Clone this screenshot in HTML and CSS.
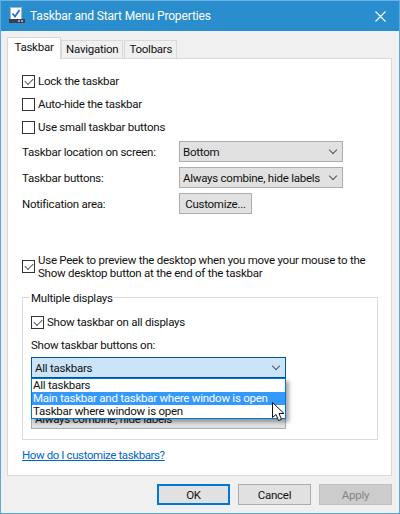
FILE: index.html
```html
<!DOCTYPE html>
<html lang="en">
<head>
    <meta charset="UTF-8">
    <meta name="viewport" content="width=device-width, initial-scale=1.0">
    <title>Taskbar and Start Menu Properties</title>
    <link rel="stylesheet" href="styles.css">
</head>
<body>
    <div class="window">
        <div class="titlebar">
            <svg class="app-icon" width="17" height="18" viewBox="0 0 17 18">
                <rect x="1.5" y="0.5" width="11" height="12" fill="#fff" stroke="#a8b4bc"/>
                <path d="M3.5 6.5l2.5 3L10.5 3" fill="none" stroke="#1f6fe0" stroke-width="1.8"/>
                <rect x="0" y="12" width="16" height="4" fill="#3a3f58"/>
                <rect x="9" y="13" width="2" height="2" fill="#9aa3ab"/>
                <rect x="12" y="13" width="2" height="2" fill="#9aa3ab"/>
            </svg>
            <span class="title-text">Taskbar and Start Menu Properties</span>
            <svg class="close-icon" width="11" height="11" viewBox="0 0 11 11">
                <path d="M0.5 0.5l10 10M10.5 0.5l-10 10" stroke="#fff" stroke-width="1.1"/>
            </svg>
        </div>

        <div class="tabs">
            <div class="tab active">Taskbar</div>
            <div class="tab">Navigation</div>
            <div class="tab">Toolbars</div>
        </div>

        <div class="panel">
            <div class="check-list">
                <label class="check-row"><span class="checkbox checked"></span>Lock the taskbar</label>
                <label class="check-row"><span class="checkbox"></span>Auto-hide the taskbar</label>
                <label class="check-row"><span class="checkbox"></span>Use small taskbar buttons</label>
            </div>

            <div class="settings">
                <span class="setting-label">Taskbar location on screen:</span>
                <div class="select wide">Bottom<span class="chevron"></span></div>
                <span class="setting-label">Taskbar buttons:</span>
                <div class="select wide">Always combine, hide labels<span class="chevron"></span></div>
                <span class="setting-label">Notification area:</span>
                <div class="btn customize">Customize...</div>
            </div>

            <label class="check-row peek"><span class="checkbox checked"></span>
                <span>Use Peek to preview the desktop when you move your mouse to the<br>Show desktop button at the end of the taskbar</span>
            </label>

            <div class="group">
                <span class="legend">Multiple displays</span>
                <label class="check-row"><span class="checkbox checked"></span>Show taskbar on all displays</label>
                <div class="group-label">Show taskbar buttons on:</div>
                <div class="combo">
                    <div class="select open">All taskbars<span class="chevron"></span></div>
                    <div class="dropdown">
                        <div class="option">All taskbars</div>
                        <div class="option selected">Main taskbar and taskbar where window is open</div>
                        <div class="option">Taskbar where window is open</div>
                    </div>
                    <svg class="cursor" width="14" height="21" viewBox="0 0 14 21">
                        <path d="M0.5 0.5v15l3.5-3 2.5 6 3-1.2-2.5-5.8h5z" fill="#fff" stroke="#111"/>
                    </svg>
                </div>
                <div class="select under">Always combine, hide labels</div>
            </div>

            <a class="help-link" href="#">How do I customize taskbars?</a>
        </div>

        <div class="footer">
            <div class="btn default">OK</div>
            <div class="btn">Cancel</div>
            <div class="btn disabled">Apply</div>
        </div>
    </div>
</body>
</html>
```

FILE: styles.css
```css
* {
    box-sizing: border-box;
}

body {
    margin: 0;
    font-family: 'Roboto', sans-serif;
    font-size: 11.5px;
    letter-spacing: -0.25px;
    color: #111;
    white-space: nowrap;
}

.window {
    width: 400px;
    height: 514px;
    background-color: #f0f0f0;
    border: 1px solid #5aa9e0;
    border-top-color: #6cb3e4;
    overflow: hidden;
}

.titlebar {
    display: flex;
    align-items: center;
    height: 30px;
    background-color: #2a8dce;
    color: white;
    padding: 0 13px 0 8px;
}

.app-icon {
    margin-right: 4px;
}

.title-text {
    flex: 1;
    font-size: 12px;
    letter-spacing: -0.15px;
}

.tabs {
    display: flex;
    align-items: flex-end;
    height: 27px;
    padding-left: 6px;
}

.tab {
    height: 18px;
    line-height: 16px;
    padding: 0 4px;
    margin-right: 1px;
    border: 1px solid #d9d9d9;
    border-bottom: none;
    background-color: #f0f0f0;
}

.tab.active {
    height: 22px;
    line-height: 19px;
    width: 54px;
    margin-right: 0;
    margin-bottom: -1px;
    background-color: white;
    position: relative;
    z-index: 1;
    text-align: center;
}

.panel {
    margin-left: 6px;
    width: 385px;
    height: 418px;
    background-color: white;
    border: 1px solid #d9d9d9;
    padding: 15px 13px 0 14px;
}

.check-row {
    display: flex;
    align-items: center;
    gap: 3px;
    height: 14px;
}

.check-list {
    display: flex;
    flex-direction: column;
    gap: 9px;
}

.checkbox {
    flex: none;
    width: 13px;
    height: 13px;
    border: 1px solid #333;
    background-color: white;
}

.checkbox.checked {
    background: white;
    position: relative;
}

.checkbox.checked::after {
    content: "";
    position: absolute;
    left: 1px;
    top: 0;
    width: 7px;
    height: 4px;
    margin: 2px 0 0 1px;
    border-left: 1.5px solid #555;
    border-bottom: 1.5px solid #555;
    transform: rotate(-45deg);
}

.settings {
    display: grid;
    grid-template-columns: 157px 164px;
    row-gap: 5px;
    align-items: center;
    margin-top: 7px;
}

.select {
    display: flex;
    align-items: center;
    justify-content: space-between;
    height: 21px;
    padding: 0 5px 0 3px;
    background-color: #e1e1e1;
    border: 1px solid #adadad;
}

.chevron {
    width: 6px;
    height: 6px;
    margin: -4px 1px 0 0;
    border-right: 1px solid #555;
    border-bottom: 1px solid #555;
    transform: rotate(45deg);
}

.btn {
    display: flex;
    align-items: center;
    justify-content: center;
    width: 73px;
    height: 21px;
    background-color: #e1e1e1;
    border: 1px solid #adadad;
}

.btn.default {
    border: 2px solid #0078d7;
}

.btn.disabled {
    background-color: #ccc;
    border-color: #bfbfbf;
    color: #838383;
}

.peek {
    height: 27px;
    margin-top: 39px;
    line-height: 13px;
}

.group {
    position: relative;
    width: 356px;
    height: 143px;
    margin-top: 17px;
    border: 1px solid #dcdcdc;
    padding: 17px 8px 0 8px;
}

.legend {
    position: absolute;
    left: 7px;
    top: -7px;
    padding: 0 1px;
    line-height: 14px;
    background-color: white;
}

.group-label {
    margin-top: 9px;
    line-height: 14px;
}

.combo {
    position: relative;
    width: 255px;
    margin-top: 5px;
}

.select.open {
    background-color: #cce4f7;
    border-color: #005499;
}

.dropdown {
    position: absolute;
    left: 0;
    top: 21px;
    width: 255px;
    z-index: 2;
    background-color: white;
    border: 1px solid #0078d7;
    box-shadow: 3px 3px 4px rgba(0, 0, 0, 0.35);
}

.option {
    height: 13px;
    line-height: 13px;
    padding-left: 1px;
}

.option.selected {
    background-color: #3399ff;
    color: white;
}

.cursor {
    position: absolute;
    left: 241px;
    top: 45px;
    z-index: 3;
}

.select.under {
    width: 255px;
    margin-top: 30px;
}

.help-link {
    display: block;
    margin-top: 8px;
    color: #0066cc;
    line-height: 14px;
    letter-spacing: -0.4px;
}

.footer {
    display: flex;
    justify-content: flex-end;
    gap: 8px;
    padding: 8px 7px 0 0;
}
```
